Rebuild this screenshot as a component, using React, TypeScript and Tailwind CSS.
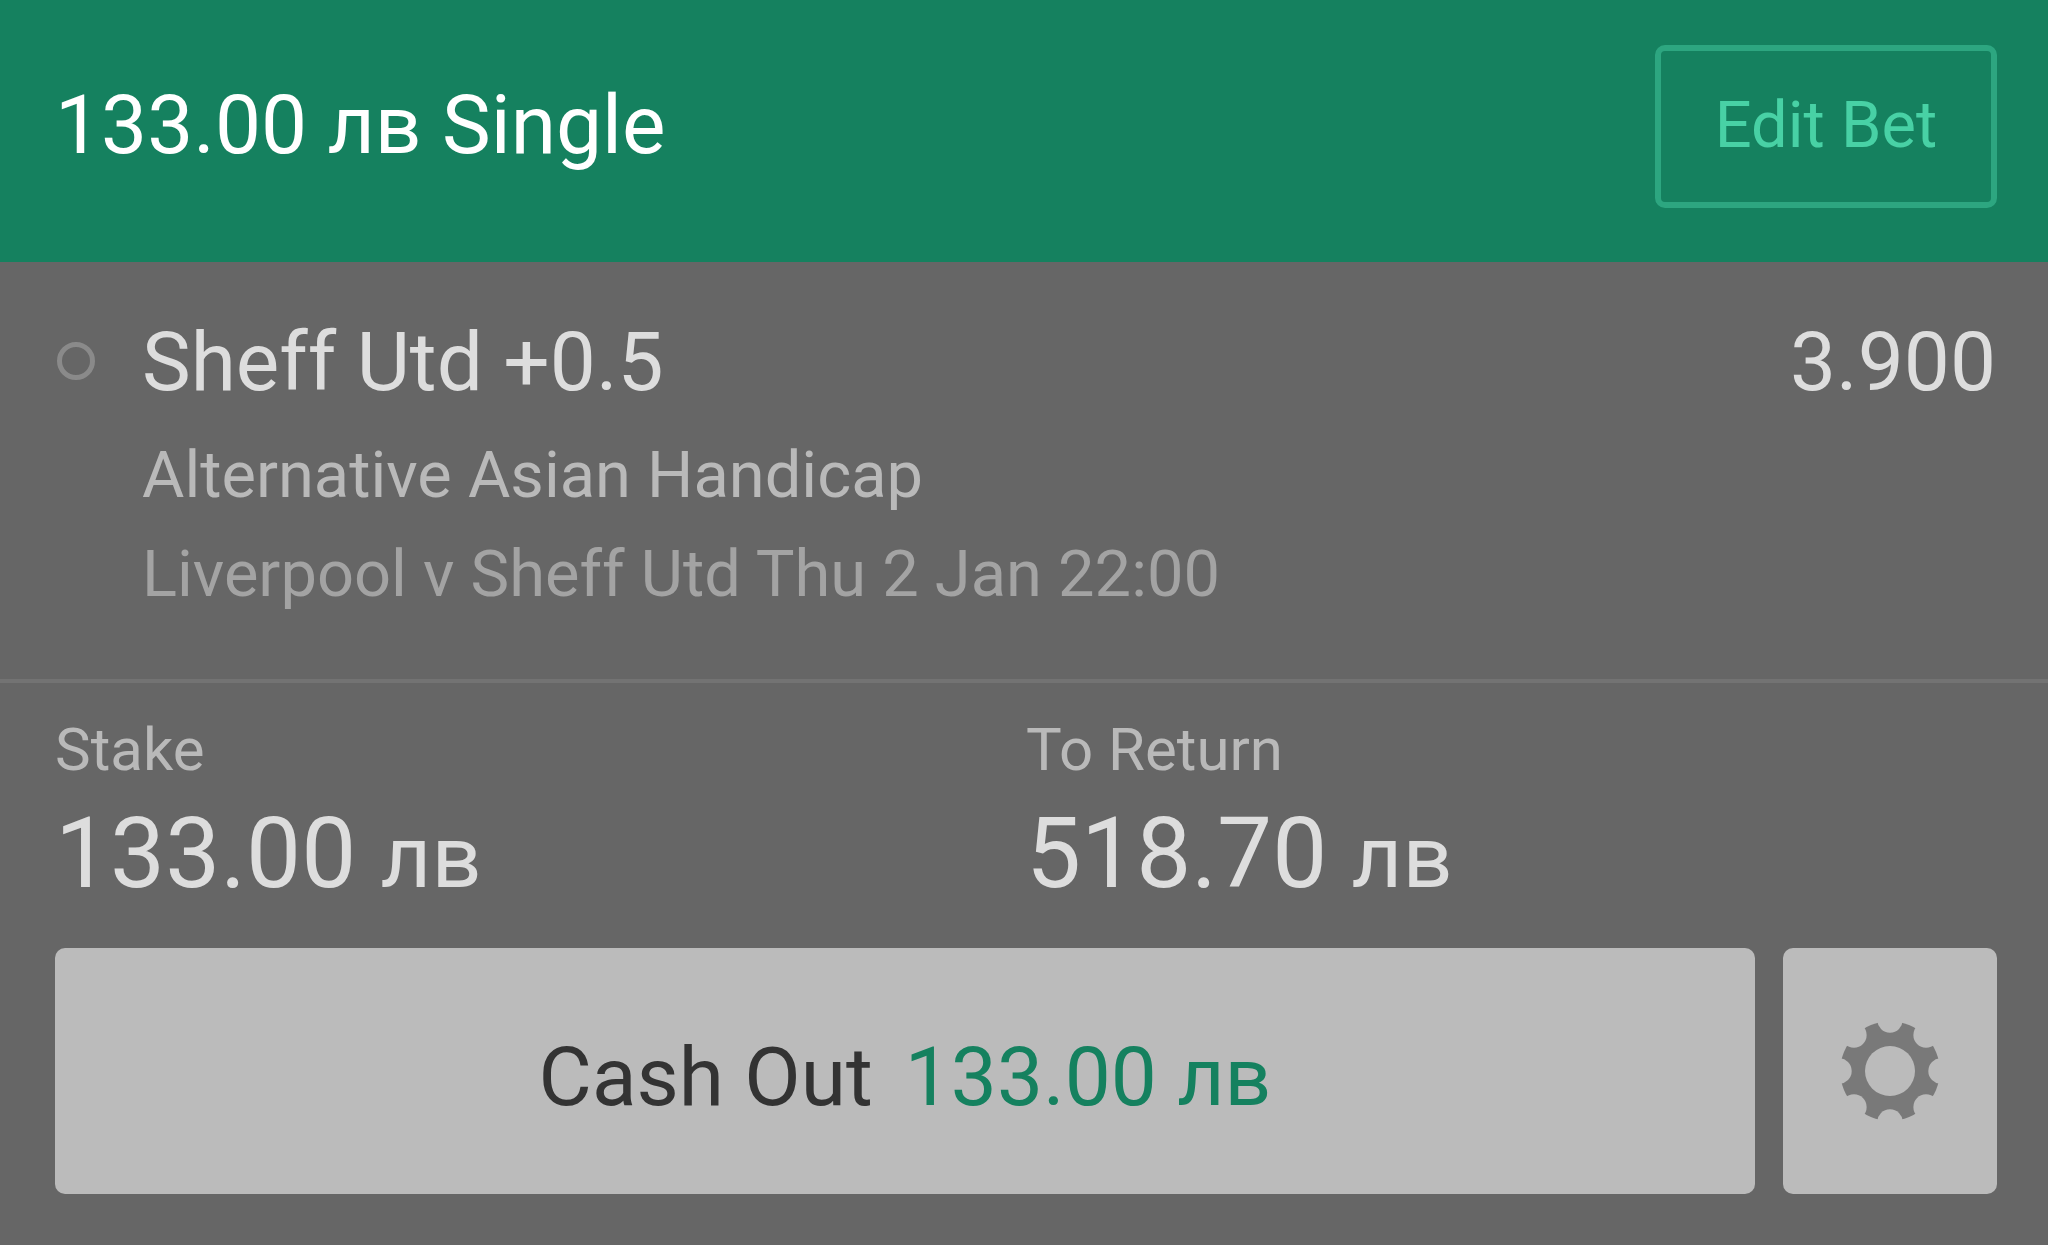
interface AmountProps {
  label: string
  value: string
}

function Amount({ label, value }: AmountProps) {
  return (
    <div className="flex-1">
      <dt className="text-[60px] leading-[72px] text-[#b9b9b9]">{label}</dt>
      <dd className="mt-3 text-[98px] leading-[112px] text-[#dddddd]">
        {value} <span className="text-[88px] leading-none">лв</span>
      </dd>
    </div>
  )
}

const NOTCHES = [0, 45, 90, 135, 180, 225, 270, 315]

function GearIcon() {
  return (
    <svg viewBox="-50 -50 100 100" className="h-[100px] w-[100px]" aria-hidden="true">
      <mask id="gear-cutouts" maskUnits="userSpaceOnUse" x="-50" y="-50" width="100" height="100">
        <rect x="-50" y="-50" width="100" height="100" fill="white" />
        <circle r="25" fill="black" />
        {NOTCHES.map((angle) => (
          <circle key={angle} cy="-51" r="12.7" fill="black" transform={`rotate(${angle})`} />
        ))}
      </mask>
      <circle r="49.8" fill="#797979" mask="url(#gear-cutouts)" />
    </svg>
  )
}

export default function App() {
  return (
    <main className="min-h-screen bg-[#666666] font-[Roboto,sans-serif]">
      <header className="flex items-center justify-between bg-[#15815f] pt-[45px] pr-[51px] pb-[54px] pl-[55px]">
        <h1 className="pb-1 text-[82px] leading-[96px] text-white">133.00 лв Single</h1>
        <button className="h-[163px] w-[342px] rounded-[10px] border-6 border-[#2da680] pb-0.5 text-[65px] text-[#48d1a5]">
          Edit Bet
        </button>
      </header>

      <section className="flex border-b-4 border-[#737373] pt-[52px] pr-[52px] pb-[55px] pl-[57px]">
        <span className="mt-7 h-[38px] w-[38px] rounded-full border-5 border-[#8a8a8a]" />
        <div className="ml-[47px] flex-1">
          <h2 className="text-[82px] leading-[96px] text-[#dddddd]">Sheff Utd +0.5</h2>
          <p className="mt-4 text-[65px] leading-[99px] text-[#b9b9b9]">Alternative Asian Handicap</p>
          <p className="text-[65px] leading-[99px] text-[#a3a3a3]">Liverpool v Sheff Utd Thu 2 Jan 22:00</p>
        </div>
        <span className="text-[82px] leading-[96px] text-[#dddddd]">3.900</span>
      </section>

      <dl className="flex pt-[31px] pr-[51px] pl-[55px]">
        <Amount label="Stake" value="133.00" />
        <Amount label="To Return" value="518.70" />
      </dl>

      <div className="flex gap-7 pt-[38px] pr-[51px] pb-[50px] pl-[55px]">
        <button className="flex h-[246px] flex-1 items-center justify-center gap-8 rounded-[10px] bg-[#bbbbbb] pt-3 text-[82px]">
          <span className="text-[#333333]">Cash Out</span>
          <span className="text-[#15815f]">133.00 лв</span>
        </button>
        <button
          aria-label="Cash out settings"
          className="flex h-[246px] w-[214px] items-center justify-center rounded-[10px] bg-[#bbbbbb]"
        >
          <GearIcon />
        </button>
      </div>
    </main>
  )
}
